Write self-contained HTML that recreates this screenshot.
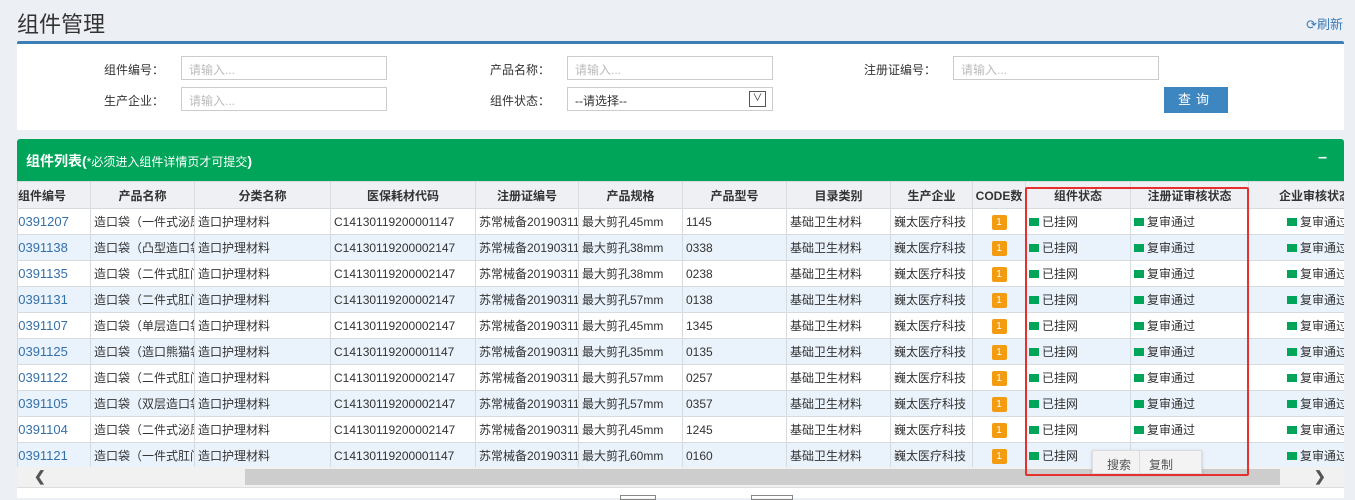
<!DOCTYPE html>
<html><head><meta charset="utf-8"><style>
*{box-sizing:border-box;margin:0;padding:0}
body{width:1355px;height:498px;background:#eceff4;font-family:"Liberation Sans","Noto Sans CJK SC",sans-serif;font-size:12px;color:#333;position:relative;overflow:hidden}
.abs{position:absolute}
.title{left:17px;top:7px;font-size:22px;color:#333}
.refresh{right:12px;top:14px;color:#3a7ab8;font-size:13px}
.bar{left:17px;top:41px;width:1327px;height:3px;background:#3d7eb6;border-radius:2px 2px 0 0}
.panel{left:17px;top:44px;width:1327px;height:86px;background:#fff}
.lab{font-size:12px;color:#333;text-align:right;width:100px}
.inp{width:206px;height:24px;border:1px solid #ccc;color:#bbb;padding:4px 7px;font-size:12px;background:#fff}
.btn{left:1164px;top:87px;width:64px;height:26px;background:#3e86c0;color:#fff;text-align:center;line-height:26px;font-size:13px;letter-spacing:5px}
.green{left:17px;top:139px;width:1327px;height:42px;background:#00a55a;border-radius:3px 3px 0 0;color:#fff}
.wrap{position:absolute;left:17px;top:181px;width:1327px;height:287px;overflow:hidden;background:#fff}
table{position:absolute;left:0;top:0;border-collapse:collapse;table-layout:fixed;background:#fff}
td,th{height:26px;border:1px solid #d6dbe0;white-space:nowrap;overflow:hidden;font-size:12px;padding:0 3px}
th{background:#eef0f3;font-weight:bold;text-align:center;height:27px;color:#333}
tr.s td{background:#eaf2fb}
.lk{color:#3470a8;font-size:13px}
.lk span{margin-left:-7px}
.bd{display:inline-block;width:15px;height:15px;background:#f39c12;color:#fff;border-radius:2px;font-size:10px;line-height:15px;text-align:center}
.sq{display:inline-block;width:10px;height:8px;background:#00a55a;margin-right:3px}
.l{padding-left:38px}
</style></head><body>
<div class="abs title">组件管理</div>
<div class="abs refresh">⟳刷新</div>
<div class="abs bar"></div>
<div class="abs panel"></div>
<div class="abs lab" style="left:64px;top:61px">组件编号：</div>
<div class="abs inp" style="left:181px;top:56px">请输入...</div>
<div class="abs lab" style="left:64px;top:92px">生产企业：</div>
<div class="abs inp" style="left:181px;top:87px">请输入...</div>
<div class="abs lab" style="left:450px;top:61px">产品名称：</div>
<div class="abs inp" style="left:567px;top:56px">请输入...</div>
<div class="abs lab" style="left:450px;top:92px">组件状态：</div>
<div class="abs inp" style="left:567px;top:87px;color:#333">--请选择--<span style="position:absolute;right:6px;top:3px;width:17px;height:16px;border:1px solid #555;font-size:10px;line-height:14px;text-align:center">∨</span></div>
<div class="abs lab" style="left:836px;top:61px">注册证编号：</div>
<div class="abs inp" style="left:953px;top:56px">请输入...</div>
<div class="abs btn">查询</div>
<div class="abs green"><span style="position:absolute;left:9px;top:12px;font-size:14px;font-weight:bold">组件列表(<span style="font-weight:normal;font-size:12px">*必须进入组件详情页才可提交</span>)</span><span style="position:absolute;right:17px;top:10px;font-size:16px;font-weight:bold">–</span></div>
<div class="wrap">
<table style="width:1345px">
<colgroup><col style="width:73px"><col style="width:104px"><col style="width:136px"><col style="width:145px"><col style="width:103px"><col style="width:104px"><col style="width:104px"><col style="width:104px"><col style="width:82px"><col style="width:53px"><col style="width:105px"><col style="width:118px"><col style="width:114px"></colgroup>
<tr><th style="text-align:left;padding:0">组件编号</th><th>产品名称</th><th>分类名称</th><th>医保耗材代码</th><th>注册证编号</th><th>产品规格</th><th>产品型号</th><th>目录类别</th><th>生产企业</th><th style="padding:0">CODE数</th><th>组件状态</th><th>注册证审核状态</th><th style="text-align:left;padding-left:30px">企业审核状态</th></tr>
<tr><td class="lk" style="padding:0"><span>00391207</span></td><td>造口袋（一件式泌尿</td><td>造口护理材料</td><td>C14130119200001147</td><td>苏常械备20190311</td><td>最大剪孔45mm</td><td>1145</td><td>基础卫生材料</td><td>巍太医疗科技</td><td style="text-align:center"><span class="bd">1</span></td><td><span class="sq"></span>已挂网</td><td><span class="sq"></span>复审通过</td><td class="l"><span class="sq"></span>复审通过</td></tr>
<tr class="s"><td class="lk" style="padding:0"><span>00391138</span></td><td>造口袋（凸型造口袋</td><td>造口护理材料</td><td>C14130119200002147</td><td>苏常械备20190311</td><td>最大剪孔38mm</td><td>0338</td><td>基础卫生材料</td><td>巍太医疗科技</td><td style="text-align:center"><span class="bd">1</span></td><td><span class="sq"></span>已挂网</td><td><span class="sq"></span>复审通过</td><td class="l"><span class="sq"></span>复审通过</td></tr>
<tr><td class="lk" style="padding:0"><span>00391135</span></td><td>造口袋（二件式肛门</td><td>造口护理材料</td><td>C14130119200002147</td><td>苏常械备20190311</td><td>最大剪孔38mm</td><td>0238</td><td>基础卫生材料</td><td>巍太医疗科技</td><td style="text-align:center"><span class="bd">1</span></td><td><span class="sq"></span>已挂网</td><td><span class="sq"></span>复审通过</td><td class="l"><span class="sq"></span>复审通过</td></tr>
<tr class="s"><td class="lk" style="padding:0"><span>00391131</span></td><td>造口袋（二件式肛门</td><td>造口护理材料</td><td>C14130119200002147</td><td>苏常械备20190311</td><td>最大剪孔57mm</td><td>0138</td><td>基础卫生材料</td><td>巍太医疗科技</td><td style="text-align:center"><span class="bd">1</span></td><td><span class="sq"></span>已挂网</td><td><span class="sq"></span>复审通过</td><td class="l"><span class="sq"></span>复审通过</td></tr>
<tr><td class="lk" style="padding:0"><span>00391107</span></td><td>造口袋（单层造口袋</td><td>造口护理材料</td><td>C14130119200002147</td><td>苏常械备20190311</td><td>最大剪孔45mm</td><td>1345</td><td>基础卫生材料</td><td>巍太医疗科技</td><td style="text-align:center"><span class="bd">1</span></td><td><span class="sq"></span>已挂网</td><td><span class="sq"></span>复审通过</td><td class="l"><span class="sq"></span>复审通过</td></tr>
<tr class="s"><td class="lk" style="padding:0"><span>00391125</span></td><td>造口袋（造口熊猫袋</td><td>造口护理材料</td><td>C14130119200001147</td><td>苏常械备20190311</td><td>最大剪孔35mm</td><td>0135</td><td>基础卫生材料</td><td>巍太医疗科技</td><td style="text-align:center"><span class="bd">1</span></td><td><span class="sq"></span>已挂网</td><td><span class="sq"></span>复审通过</td><td class="l"><span class="sq"></span>复审通过</td></tr>
<tr><td class="lk" style="padding:0"><span>00391122</span></td><td>造口袋（二件式肛门</td><td>造口护理材料</td><td>C14130119200002147</td><td>苏常械备20190311</td><td>最大剪孔57mm</td><td>0257</td><td>基础卫生材料</td><td>巍太医疗科技</td><td style="text-align:center"><span class="bd">1</span></td><td><span class="sq"></span>已挂网</td><td><span class="sq"></span>复审通过</td><td class="l"><span class="sq"></span>复审通过</td></tr>
<tr class="s"><td class="lk" style="padding:0"><span>00391105</span></td><td>造口袋（双层造口袋</td><td>造口护理材料</td><td>C14130119200002147</td><td>苏常械备20190311</td><td>最大剪孔57mm</td><td>0357</td><td>基础卫生材料</td><td>巍太医疗科技</td><td style="text-align:center"><span class="bd">1</span></td><td><span class="sq"></span>已挂网</td><td><span class="sq"></span>复审通过</td><td class="l"><span class="sq"></span>复审通过</td></tr>
<tr><td class="lk" style="padding:0"><span>00391104</span></td><td>造口袋（二件式泌尿</td><td>造口护理材料</td><td>C14130119200002147</td><td>苏常械备20190311</td><td>最大剪孔45mm</td><td>1245</td><td>基础卫生材料</td><td>巍太医疗科技</td><td style="text-align:center"><span class="bd">1</span></td><td><span class="sq"></span>已挂网</td><td><span class="sq"></span>复审通过</td><td class="l"><span class="sq"></span>复审通过</td></tr>
<tr class="s"><td class="lk" style="padding:0"><span>00391121</span></td><td>造口袋（一件式肛门</td><td>造口护理材料</td><td>C14130119200001147</td><td>苏常械备20190311</td><td>最大剪孔60mm</td><td>0160</td><td>基础卫生材料</td><td>巍太医疗科技</td><td style="text-align:center"><span class="bd">1</span></td><td><span class="sq"></span>已挂网</td><td></td><td class="l"><span class="sq"></span>复审通过</td></tr>
</table>
</div>
<div class="abs" style="left:17px;top:467px;width:1327px;height:20px;background:#f1f1f1"></div>
<div class="abs" style="left:245px;top:469px;width:1035px;height:16px;background:#cdcdcd"></div>
<div class="abs" style="left:34px;top:468px;font-size:14px;font-weight:bold;color:#555">❮</div>
<div class="abs" style="left:1314px;top:468px;font-size:14px;font-weight:bold;color:#555">❯</div>
<div class="abs" style="left:17px;top:487px;width:1327px;height:11px;background:#fff;border-top:1px solid #ddd"></div>
<div class="abs" style="left:620px;top:495px;width:36px;height:5px;border:1px solid #888"></div>
<div class="abs" style="left:751px;top:495px;width:42px;height:5px;border:1px solid #888"></div>
<div class="abs" style="left:1092px;top:450px;width:110px;height:24px;background:#f3f3f3;border:1px solid #ddd;box-shadow:0 1px 3px rgba(0,0,0,.2);font-size:12px;color:#555">
<span style="position:absolute;left:14px;top:5px">搜索</span><span style="position:absolute;left:46px;top:0;width:1px;height:24px;background:#ddd"></span><span style="position:absolute;left:56px;top:5px">复制</span></div>
<div class="abs" style="left:1025px;top:187px;width:224px;height:289px;border:2px solid #e53030;border-radius:2px"></div>
</body></html>
